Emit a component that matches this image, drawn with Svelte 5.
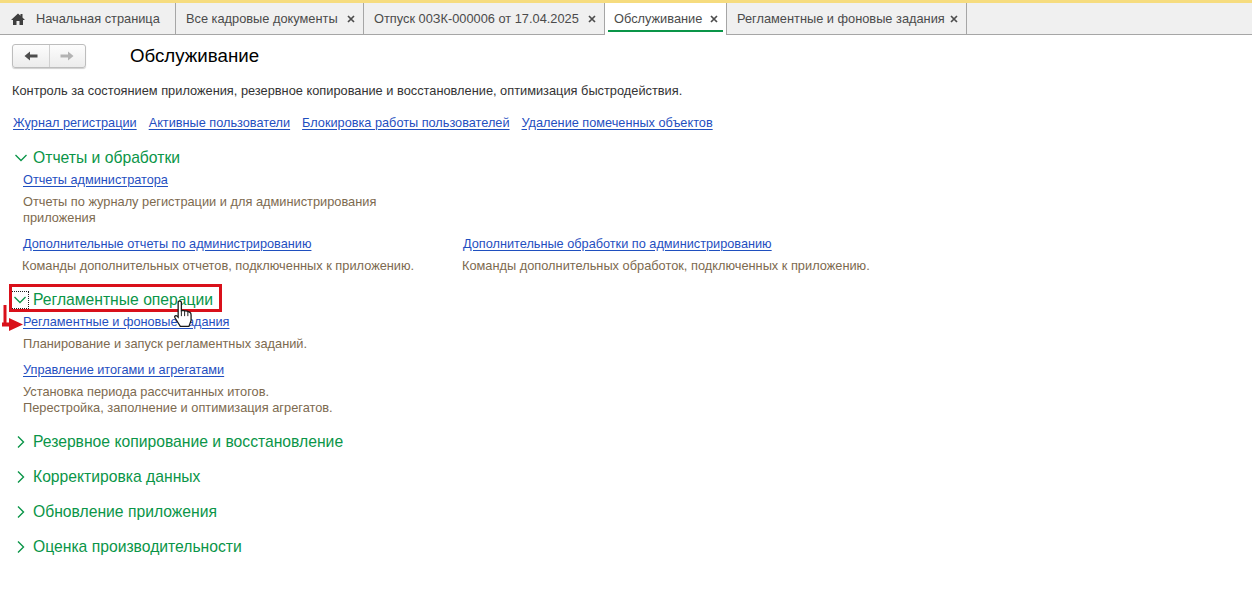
<script>
  const tabs = [
    { label: 'Все кадровые документы', w: 188 },
    { label: 'Отпуск 00ЗК-000006 от 17.04.2025', w: 241 },
    { label: 'Обслуживание', w: 122, active: true },
    { label: 'Регламентные и фоновые задания', w: 240 }
  ];
  const topLinks = ['Журнал регистрации', 'Активные пользователи', 'Блокировка работы пользователей', 'Удаление помеченных объектов'];
  const closed = ['Резервное копирование и восстановление', 'Корректировка данных', 'Обновление приложения', 'Оценка производительности'];
</script>

{#snippet chevron(open)}
  <svg class="chev" width="14" height="14" viewBox="0 0 14 14">
    {#if open}
      <path d="M1.5 4 L7 9.5 L12.5 4" fill="none" stroke="#0a9548" stroke-width="1.3" />
    {:else}
      <path d="M4 1.5 L9.5 7 L4 12.5" fill="none" stroke="#0a9548" stroke-width="1.4" />
    {/if}
  </svg>
{/snippet}

{#snippet close()}
  <svg class="x" width="8" height="8" viewBox="0 0 8 8">
    <path d="M1 1 L7 7 M7 1 L1 7" stroke="#4d4d4d" stroke-width="1.7" />
  </svg>
{/snippet}

<div class="page">
  <div class="strip"></div>
  <nav class="tabbar">
    <div class="tab home">
      <svg width="14" height="12" viewBox="0 0 14 12">
        <path d="M7 0.5 L9.5 2.8 V1 H11.5 V4.6 L14 7 H12 V12 H8.5 V8 H5.5 V12 H2 V7 H0 Z" fill="#3f3f3f" />
      </svg>
      <span>Начальная страница</span>
    </div>
    {#each tabs as t}
      <div class="tab" class:active={t.active} style="width:{t.w}px">
        <span>{t.label}</span>
        {@render close()}
      </div>
    {/each}
  </nav>

  <main>
    <header class="head">
      <div class="nav">
        <button class="nb" aria-label="Назад">
          <svg width="14" height="10" viewBox="0 0 14 10"><path d="M0.5 5 L6 0.5 V3.5 H13.5 V6.5 H6 V9.5 Z" fill="#4d4d4d" /></svg>
        </button>
        <button class="nb" aria-label="Вперед">
          <svg width="14" height="10" viewBox="0 0 14 10"><path d="M13.5 5 L8 0.5 V3.5 H0.5 V6.5 H8 V9.5 Z" fill="#b3b3b3" /></svg>
        </button>
      </div>
      <h1>Обслуживание</h1>
    </header>

    <p class="intro">Контроль за состоянием приложения, резервное копирование и восстановление, оптимизация быстродействия.</p>

    <div class="toplinks">
      {#each topLinks as l}<a href="#top">{l}</a>{/each}
    </div>

    <section class="first">
      <h2>{@render chevron(true)}<span>Отчеты и обработки</span></h2>
      <div class="body">
        <a href="#top">Отчеты администратора</a>
        <p class="wrap">Отчеты по журналу регистрации и для администрирования приложения</p>
        <div class="cols">
          <div class="col">
            <a href="#top">Дополнительные отчеты по администрированию</a>
            <p>Команды дополнительных отчетов, подключенных к приложению.</p>
          </div>
          <div class="col">
            <a href="#top">Дополнительные обработки по администрированию</a>
            <p>Команды дополнительных обработок, подключенных к приложению.</p>
          </div>
        </div>
      </div>
    </section>

    <section class="second">
      <h2>
        <span class="focus">{@render chevron(true)}</span><span>Регламентные операции</span>
      </h2>
      <div class="body">
        <a href="#top">Регламентные и фоновые задания</a>
        <p>Планирование и запуск регламентных заданий.</p>
        <a class="next" href="#top">Управление итогами и агрегатами</a>
        <p>Установка периода рассчитанных итогов.<br />Перестройка, заполнение и оптимизация агрегатов.</p>
      </div>
    </section>

    <div class="closed">
      {#each closed as c}
        <h2>{@render chevron(false)}<span>{c}</span></h2>
      {/each}
    </div>
  </main>

  <div class="redbox"></div>
  <svg class="arrow" width="24" height="28" viewBox="0 0 24 28">
    <path d="M5 0 V20" stroke="#d9101a" stroke-width="3" fill="none" />
    <path d="M2 17.5 H9 V13 L23 19.5 L9 26 V21.5 H2 Z" fill="#d9101a" />
  </svg>
  <svg class="cursor" width="20" height="28" viewBox="0 0 18 26">
    <path d="M4.5 2 C4.5 0.6 7.5 0.6 7.5 2 V10 L9 9.6 L11 10 L13 10.4 L15.5 11.5 C16.5 12 16.5 13 16.5 14 V19 L14.5 24.5 H6.5 L1.5 16.5 C0.6 15 2.4 13.8 3.5 15 L4.5 16 Z" fill="#fff" stroke="#1a1a1a" stroke-width="1.2" />
    <path d="M7.5 10 V15 M10.5 10 V15 M13.5 11 V15" stroke="#1a1a1a" stroke-width="0.9" />
  </svg>
</div>

<style>
  :global(body) { margin: 0; background: #fff; }
  .page {
    position: relative;
    width: 1252px;
    height: 613px;
    overflow: hidden;
    font: 12.8px/16px "Liberation Sans", Arial, sans-serif;
    color: #333;
  }
  .strip { height: 3px; background: #f6dc7f; }
  .tabbar {
    display: flex;
    height: 31px;
    background: #f0f0f0;
    border-bottom: 1px solid #a6a6a6;
  }
  .tab {
    box-sizing: border-box;
    display: flex;
    align-items: center;
    justify-content: space-between;
    height: 31px;
    padding: 0 8px 0 10px;
    border-right: 1px solid #a6a6a6;
    color: #4b4b4b;
    white-space: nowrap;
  }
  .tab.home { width: 176px; justify-content: flex-start; gap: 11px; padding-left: 11px; }
  .tab.active {
    background: #fff;
    position: relative;
    height: 32px;
    padding-left: 9px;
    padding-bottom: 1px;
  }
  .tab.active::after {
    content: "";
    position: absolute;
    left: 3px;
    right: 3px;
    bottom: 3px;
    height: 2px;
    background: #0a9548;
  }
  main { padding: 0 12px; }
  .head { display: flex; align-items: center; height: 42px; }
  .nav {
    display: flex;
    width: 74px;
    height: 24px;
    box-sizing: border-box;
    border: 1px solid #bdbdbd;
    border-radius: 3px;
    background: linear-gradient(#fdfdfd, #ececec);
    box-shadow: 0 1px 1px #d0d0d0;
  }
  .nb {
    flex: 1;
    padding: 0;
    border: 0;
    background: none;
    display: flex;
    align-items: center;
    justify-content: center;
  }
  .nb + .nb { border-left: 1px solid #d0d0d0; }
  h1 {
    margin: 0 0 0 44px;
    font-size: 18.7px;
    font-weight: 400;
    color: #000;
  }
  p { margin: 0; color: #7d6a4f; }
  a { color: #1f4fbf; text-decoration: underline; text-underline-offset: 2px; font-size: 12.72px; }
  .intro { color: #333; margin-top: 6px; }
  .toplinks { display: flex; gap: 12px; margin-top: 16px; padding-left: 1px; }
  h2 {
    display: flex;
    align-items: center;
    height: 20px;
    margin: 0;
    font-size: 15.7px;
    font-weight: 400;
    color: #0a9548;
  }
  .chev { margin: 0 5px 0 2px; flex: none; }
  .first { margin-top: 17px; }
  .body { padding: 4px 0 0 11px; }
  .body a { display: block; width: max-content; }
  .body p { margin-top: 6px; }
  .wrap { width: 390px; }
  .cols { display: flex; margin-top: 10px; }
  .col { width: 440px; }
  .col p { margin-left: -1px; }
  .second { margin-top: 16px; }
  .next { margin-top: 10px; }
  .focus { display: flex; outline: 1px dotted #222; height: 16px; width: 16px; margin-right: 5px; align-items: center; }
  .focus .chev { margin: 0 0 0 1px; }
  .closed { margin-top: 16px; display: flex; flex-direction: column; gap: 15px; }
  .redbox {
    position: absolute;
    left: 9px;
    top: 284px;
    width: 213px;
    height: 28px;
    box-sizing: border-box;
    border: 3px solid #d9101a;
  }
  .arrow { position: absolute; left: 0; top: 305px; }
  .cursor { position: absolute; left: 173px; top: 300px; }
</style>
